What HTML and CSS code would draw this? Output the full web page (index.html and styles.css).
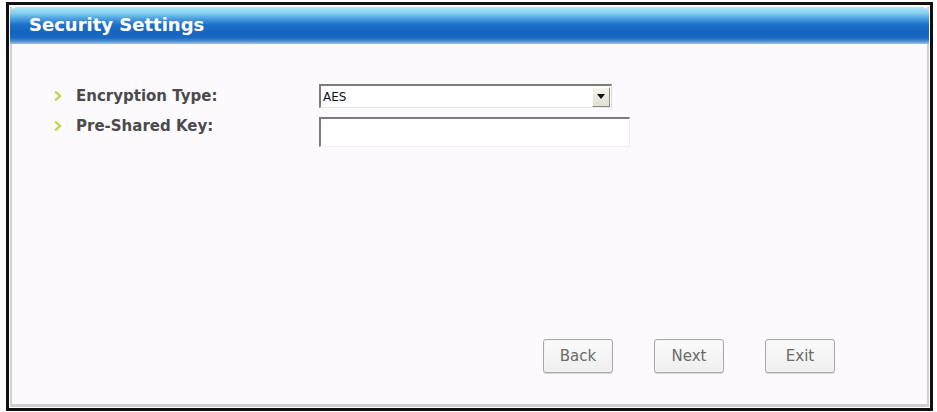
FILE: index.html
```html
<!DOCTYPE html>
<html>
<head>
<meta charset="utf-8">
<link rel="stylesheet" href="styles.css">
</head>
<body>
<div class="frame">
  <div class="panel">
    <div class="header"><span class="title">Security Settings</span></div>
    <div class="form">
      <div class="row">
        <div class="label"><span class="bullet"><svg width="9" height="10" viewBox="0 0 9 10"><path d="M1.8 1.2 L6 5 L1.8 8.8" fill="none" stroke="#c3d94c" stroke-width="2.4" stroke-linecap="round" stroke-linejoin="round"/></svg></span>Encryption Type:</div>
        <div class="select"><span class="select-text">AES</span><span class="select-btn"><span class="tri"></span></span></div>
      </div>
      <div class="row row-top">
        <div class="label"><span class="bullet"><svg width="9" height="10" viewBox="0 0 9 10"><path d="M1.8 1.2 L6 5 L1.8 8.8" fill="none" stroke="#c3d94c" stroke-width="2.4" stroke-linecap="round" stroke-linejoin="round"/></svg></span>Pre-Shared Key:</div>
        <input class="text-input" type="text">
      </div>
    </div>
    <div class="buttons">
      <button class="btn">Back</button>
      <button class="btn">Next</button>
      <button class="btn">Exit</button>
    </div>
  </div>
</div>
</body>
</html>
```
FILE: styles.css
```css
html, body {
  margin: 0;
  padding: 0;
  background: #ffffff;
  width: 937px;
  height: 412px;
  overflow: hidden;
}
.frame {
  box-sizing: border-box;
  margin: 2px 4px 0 6px;
  width: 927px;
  height: 409px;
  border: 3px solid #111111;
  padding: 2px 1px 1px 1px;
  background: #ffffff;
}
.panel {
  box-sizing: border-box;
  height: 100%;
  border-left: 2px solid #d2d0d4;
  border-right: 2px solid #d2d0d4;
  border-bottom: 3px solid #d0ced2;
  background: #fcfafd;
  display: flex;
  flex-direction: column;
}
.header {
  height: 37px;
  border-radius: 7px 7px 0 0;
  background: linear-gradient(to bottom, #b4e6f6 0%, #86d0f0 16%, #4a9ede 32%, #1c70c8 48%, #1464c0 70%, #1c6cc4 84%, #5a98d6 94%, #a9c6e6 100%);
  display: flex;
  align-items: center;
  padding-left: 19px;
  margin-left: -2px;
  margin-right: -2px;
}
.title {
  font-family: "DejaVu Sans", Verdana, sans-serif;
  font-weight: bold;
  font-size: 18px;
  color: #ffffff;
  text-shadow: 0 0 1px #5a8fc8;
  margin-top: -3px;
}
.form {
  padding-top: 40px;
  display: flex;
  flex-direction: column;
  gap: 9px;
}
.row {
  display: flex;
  align-items: center;
}
.row-top {
  align-items: flex-start;
}
.label {
  width: 265px;
  padding-left: 42px;
  display: flex;
  align-items: center;
  font-family: "DejaVu Sans", Verdana, sans-serif;
  font-weight: bold;
  font-size: 15px;
  line-height: 18px;
  color: #4b4b4d;
}
.bullet {
  width: 22px;
  display: flex;
  align-items: center;
}
.select {
  box-sizing: border-box;
  width: 293px;
  height: 24px;
  border-top: 2px solid #7c7c7c;
  border-left: 2px solid #7c7c7c;
  border-right: 1px solid #d8d8d8;
  border-bottom: 1px solid #e6e6e6;
  background: #ffffff;
  display: flex;
  align-items: center;
  justify-content: space-between;
}
.select-text {
  font-family: "DejaVu Sans", Tahoma, sans-serif;
  font-size: 12px;
  color: #111111;
  padding-left: 2px;
}
.select-btn {
  box-sizing: border-box;
  width: 18px;
  height: 20px;
  margin-right: 1px;
  background: linear-gradient(to bottom, #f6f5ee, #e2dfd2);
  border-right: 1px solid #8c8a82;
  border-bottom: 1px solid #8c8a82;
  border-top: 1px solid #ffffff;
  border-left: 1px solid #ffffff;
  display: flex;
  align-items: center;
  justify-content: center;
}
.tri {
  width: 0;
  height: 0;
  border-left: 4px solid transparent;
  border-right: 4px solid transparent;
  border-top: 5px solid #111111;
}
.text-input {
  box-sizing: border-box;
  width: 311px;
  height: 30px;
  margin: 0;
  padding: 0;
  border-top: 2px solid #7c7c7c;
  border-left: 2px solid #7c7c7c;
  border-right: 1px solid #eeeeee;
  border-bottom: 1px solid #eeeeee;
  background: #ffffff;
  outline: none;
}
.buttons {
  margin-top: auto;
  margin-bottom: 31px;
  display: flex;
  justify-content: flex-end;
  gap: 41px;
  padding-right: 92px;
}
.btn {
  box-sizing: border-box;
  width: 70px;
  height: 34px;
  border: 1px solid #a8a8a8;
  border-radius: 3px;
  box-shadow: inset 0 0 0 1px #f4f4f4, 0 1px 0 #d8d8d8;
  background: linear-gradient(to bottom, #fbfbfb, #eeeeee);
  font-family: "DejaVu Sans", Tahoma, sans-serif;
  font-size: 15px;
  color: #6a6a6a;
  padding: 0;
}
```
